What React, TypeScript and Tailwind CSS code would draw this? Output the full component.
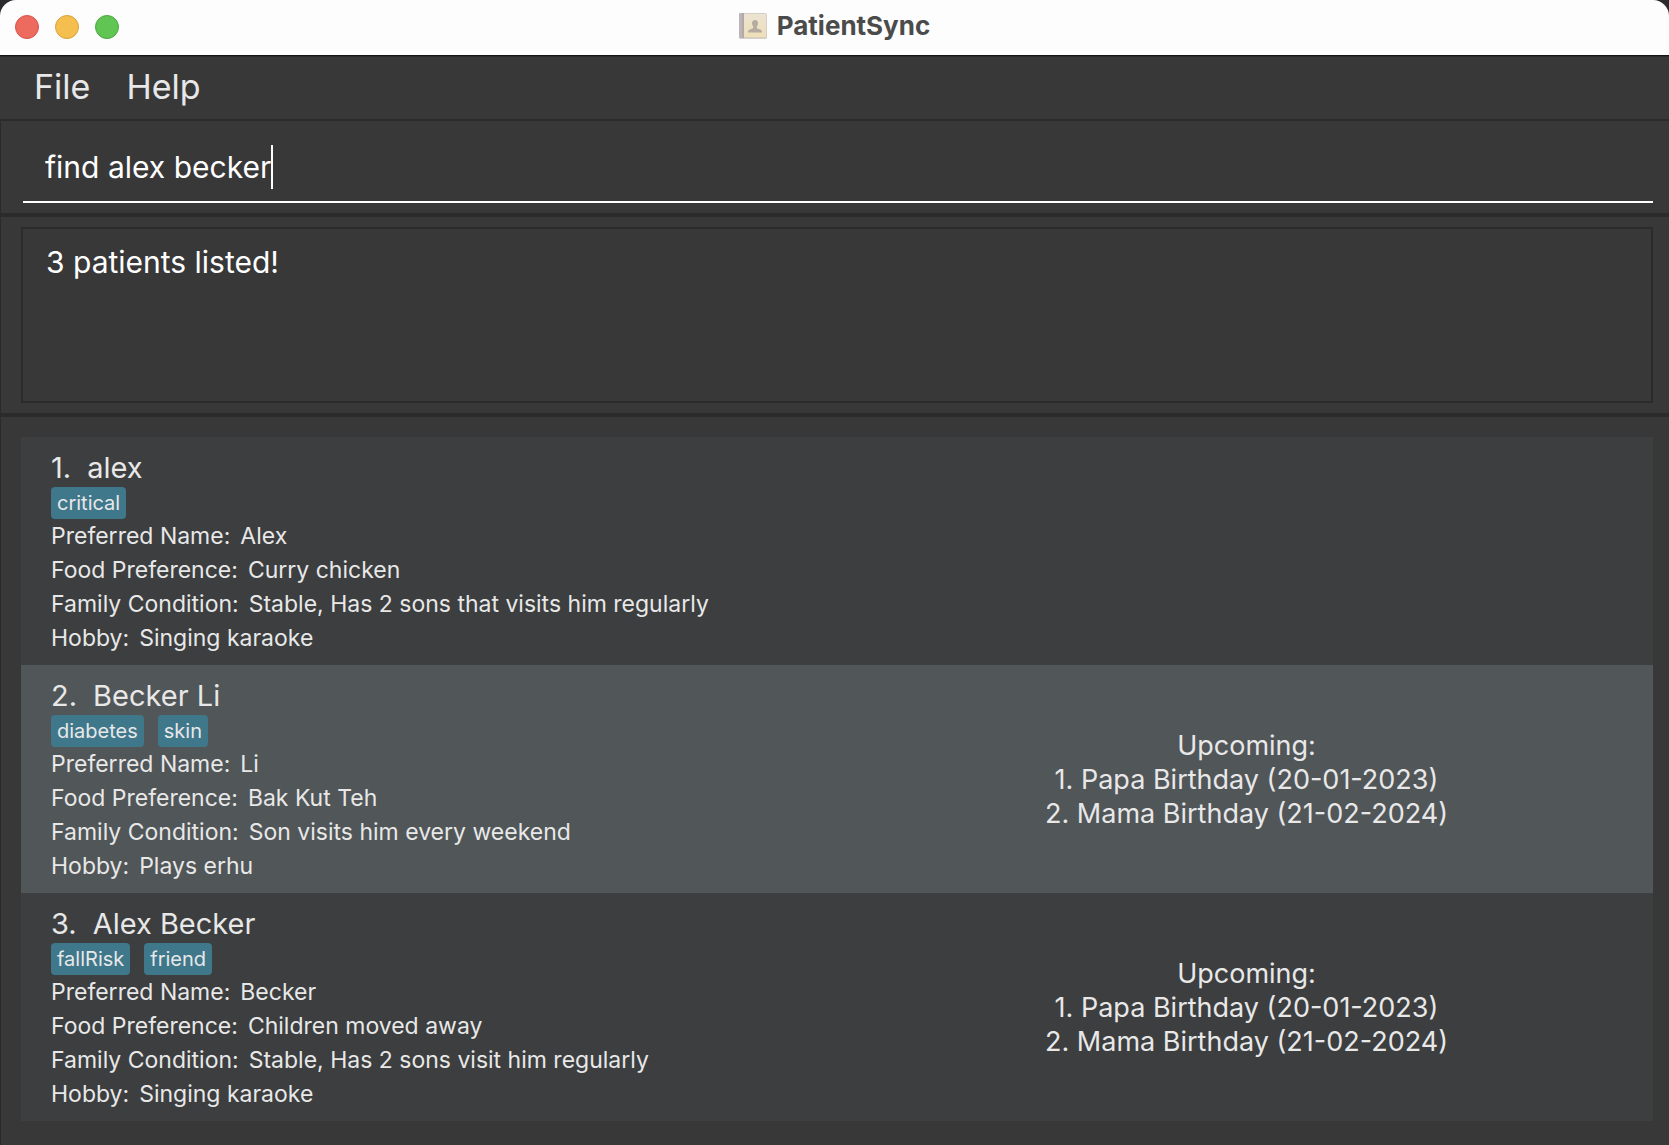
import { useState } from "react";

type Patient = {
  name: string;
  tags: string[];
  details: [string, string][];
  events: string[];
};

const EVENTS = ["Papa Birthday (20-01-2023)", "Mama Birthday (21-02-2024)"];

const PATIENTS: Patient[] = [
  {
    name: "alex",
    tags: ["critical"],
    details: [
      ["Preferred Name:", "Alex"],
      ["Food Preference:", "Curry chicken"],
      ["Family Condition:", "Stable, Has 2 sons that visits him regularly"],
      ["Hobby:", "Singing karaoke"],
    ],
    events: [],
  },
  {
    name: "Becker Li",
    tags: ["diabetes", "skin"],
    details: [
      ["Preferred Name:", "Li"],
      ["Food Preference:", "Bak Kut Teh"],
      ["Family Condition:", "Son visits him every weekend"],
      ["Hobby:", "Plays erhu"],
    ],
    events: EVENTS,
  },
  {
    name: "Alex Becker",
    tags: ["fallRisk", "friend"],
    details: [
      ["Preferred Name:", "Becker"],
      ["Food Preference:", "Children moved away"],
      ["Family Condition:", "Stable, Has 2 sons visit him regularly"],
      ["Hobby:", "Singing karaoke"],
    ],
    events: EVENTS,
  },
];

function BookIcon() {
  return (
    <svg width="28" height="26" viewBox="0 0 28 26" aria-hidden="true">
      <defs>
        <linearGradient id="cover" x1="0" y1="0" x2="0" y2="1">
          <stop offset="0" stopColor="#ece3d3" />
          <stop offset="1" stopColor="#efdfb8" />
        </linearGradient>
      </defs>
      <rect x="0" y="0" width="28" height="26" rx="1.5" fill="#d6cfc6" />
      <rect x="0" y="0" width="4" height="25" rx="1" fill="#bdb6b6" />
      <rect x="3" y="0" width="2" height="25" fill="#b0aaaa" />
      <rect x="5" y="1" width="22" height="23" fill="url(#cover)" />
      <path
        d="M16 7c2 0 3 1.300 3 3.200 0 1.300-.5 2.300-1.200 3v1.400c0 .6.4.9 1.200 1.200l2.200.8c1.200.4 1.800 1.200 1.800 3H9c0-1.800.6-2.600 1.800-3l2.200-.8c.8-.3 1.200-.6 1.200-1.200v-1.400c-.7-.7-1.200-1.700-1.200-3C13 8.300 14 7 16 7z"
        fill="#b5aca1"
      />
    </svg>
  );
}

function TitleBar() {
  return (
    <header className="grid h-[55px] grid-cols-[1fr_auto_1fr] items-center rounded-t-2xl bg-[#fdfdfd]">
      <div className="flex gap-4 pb-[2px] pl-[15px]">
        <button aria-label="Close" className="size-6 rounded-full border border-[#d9534b] bg-[#ec6a5e]" />
        <button aria-label="Minimize" className="size-6 rounded-full border border-[#d9a23c] bg-[#f4bf4f]" />
        <button aria-label="Zoom" className="size-6 rounded-full border border-[#4aa83e] bg-[#61c554]" />
      </div>
      <div className="flex items-center gap-[10px] pb-1">
        <BookIcon />
        <h1 className="text-[26px] leading-8 font-bold text-[#4b4b4b]">PatientSync</h1>
      </div>
    </header>
  );
}

function PatientCard({ patient, index }: { patient: Patient; index: number }) {
  return (
    <li className="grid grid-cols-2 items-center pt-3 pr-2 pb-[10px] pl-[30px] odd:bg-[#3c3e3f] even:bg-[#515658]">
      <div>
        <h2 className="flex gap-4 text-[29px] leading-[38px]">
          <span>{index}.</span>
          <span>{patient.name}</span>
        </h2>
        <div className="flex gap-[14px]">
          {patient.tags.map((tag) => (
            <span key={tag} className="rounded bg-[#3f778b] px-[6px] text-[20px] leading-8">
              {tag}
            </span>
          ))}
        </div>
        <dl className="text-[23px] leading-[34px]">
          {patient.details.map(([label, value]) => (
            <div key={label} className="flex gap-[10px]">
              <dt>{label}</dt>
              <dd>{value}</dd>
            </div>
          ))}
        </dl>
      </div>
      {patient.events.length > 0 && (
        <div className="text-center text-[27px] leading-[34px]">
          <h3>Upcoming:</h3>
          <ol>
            {patient.events.map((event, i) => (
              <li key={event}>
                {i + 1}. {event}
              </li>
            ))}
          </ol>
        </div>
      )}
    </li>
  );
}

export default function App() {
  const [command, setCommand] = useState("find alex becker");

  return (
    <div className="min-h-screen bg-[#2b2b2d] font-['Inter',sans-serif] text-[#e8e8e8]">
      <TitleBar />
      <div className="flex min-h-[calc(100vh-55px)] flex-col border-t border-[#151515] bg-[#383838]">
        <nav className="flex gap-9 border-t border-b-2 border-[#2b2b2b] px-[34px] pt-[5px] pb-[7px] text-[34px] leading-[50px]">
          <button>File</button>
          <button>Help</button>
        </nav>
        <main className="flex grow flex-col border-l border-[#2a2a2a]">
          <section className="border-b-4 border-[#2b2b2b] pt-4 pr-4 pb-[10px] pl-[22px]">
            <label className="flex items-center border-b-2 border-white pt-2 pb-3 pl-[22px]">
              <input
                aria-label="Command"
                value={command}
                onChange={(e) => setCommand(e.target.value)}
                className="h-11 [field-sizing:content] text-[30px] text-white outline-none"
              />
              <span className="h-11 w-[2px] bg-white" />
            </label>
          </section>
          <section className="border-b-4 border-[#2b2b2b] pt-[10px] pr-4 pb-[10px] pl-5">
            <output className="block min-h-[176px] border-2 border-[#2b2b2b] px-[23px] py-[11px] text-[30px] leading-[44px] text-white">
              3 patients listed!
            </output>
          </section>
          <ul className="pt-5 pr-4 pb-6 pl-5">
            {PATIENTS.map((patient, i) => (
              <PatientCard key={patient.name} patient={patient} index={i + 1} />
            ))}
          </ul>
        </main>
      </div>
    </div>
  );
}
